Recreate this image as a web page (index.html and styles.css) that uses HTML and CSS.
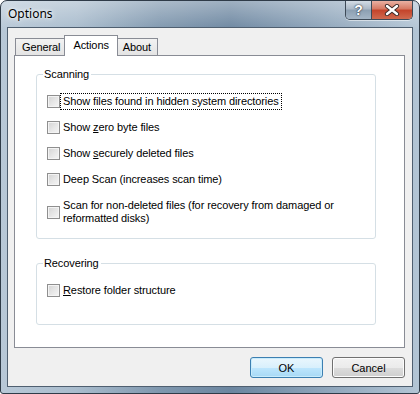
FILE: index.html
```html
<!DOCTYPE html>
<html lang="en">
  <head>
    <meta charset="UTF-8" />
    <title>Options</title>
    <link rel="stylesheet" href="styles.css">
  </head>

  <body>
    <div class="window">
      <div class="titlebar">
        <span class="title">Options</span>
        <div class="caption-buttons">
          <span class="cap help">?</span>
          <span class="cap close">
            <svg width="16" height="12" viewBox="0 0 16 12">
              <path d="M3 2 L13 10 M13 2 L3 10" stroke="#3b2a28" stroke-width="4.2" stroke-linecap="round" />
              <path d="M3 2 L13 10 M13 2 L3 10" stroke="#ffffff" stroke-width="2.4" stroke-linecap="round" />
            </svg>
          </span>
        </div>
      </div>

      <div class="client">
        <div class="tabs">
          <span class="tab">General</span>
          <span class="tab active">Actions</span>
          <span class="tab">About</span>
        </div>

        <div class="panel">
          <fieldset class="group scanning">
            <legend>Scanning</legend>
            <label class="check"><span class="box"></span><span class="text focus">Show files found in hidden system directories</span></label>
            <label class="check"><span class="box"></span><span class="text">Show <u>z</u>ero byte files</span></label>
            <label class="check"><span class="box"></span><span class="text">Show <u>s</u>ecurely deleted files</span></label>
            <label class="check"><span class="box"></span><span class="text">Deep Scan (increases scan time)</span></label>
            <label class="check"><span class="box"></span><span class="text">Scan for non-deleted files (for recovery from damaged or<br />reformatted disks)</span></label>
          </fieldset>

          <fieldset class="group recovering">
            <legend>Recovering</legend>
            <label class="check"><span class="box"></span><span class="text"><u>R</u>estore folder structure</span></label>
          </fieldset>
        </div>

        <div class="buttons">
          <button class="btn default">OK</button>
          <button class="btn">Cancel</button>
        </div>
      </div>
    </div>
  </body>
</html>
```

FILE: styles.css
```css
* {
  margin: 0;
  padding: 0;
  box-sizing: border-box;
}

body {
  width: 420px;
  height: 394px;
  font-family: "Liberation Sans", Arial, sans-serif;
  font-size: 11px;
  letter-spacing: -0.1px;
  color: #000;
  background: #ffffff;
}

.window {
  width: 420px;
  height: 394px;
  display: flex;
  flex-direction: column;
  border: 1px solid #2f3b48;
  border-radius: 7px 7px 3px 3px;
  background:
    linear-gradient(to bottom, rgba(255, 255, 255, 0.35), rgba(255, 255, 255, 0) 30px),
    linear-gradient(
      to right,
      #b8c8d7 0%,
      #a9bccd 18%,
      #7f97ae 38%,
      #6c86a0 55%,
      #8aa1b7 75%,
      #b3c5d5 100%
    );
  padding: 0 6px 6px 6px;
}

/* title bar */

.titlebar {
  height: 26px;
  display: flex;
  align-items: flex-start;
}

.title {
  font-family: "Noto Sans", "Liberation Sans", sans-serif;
  font-size: 12px;
  letter-spacing: 0;
  line-height: 26px;
  padding-left: 1px;
  text-shadow: 0 0 6px #ffffff, 0 0 3px #ffffff;
}

.caption-buttons {
  margin-left: auto;
  display: flex;
  border: 1px solid #3e4a57;
  border-top: none;
  border-radius: 0 0 5px 5px;
  overflow: hidden;
  box-shadow: 0 1px 0 rgba(255, 255, 255, 0.5);
}

.cap {
  height: 18px;
  display: flex;
  align-items: center;
  justify-content: center;
}

.help {
  width: 26px;
  border-right: 1px solid #3e4a57;
  background: linear-gradient(to bottom, #d3dce5 0%, #aab8c6 45%, #8c9fb2 50%, #a5b6c6 100%);
  color: #ffffff;
  font-weight: bold;
  font-size: 14px;
  text-shadow: 0 0 2px #2a3440, 0 0 1px #2a3440;
}

.close {
  width: 40px;
  background: linear-gradient(to bottom, #e9b1a3 0%, #d57761 45%, #c4432a 50%, #d06a4f 100%);
}

/* client area */

.client {
  flex: 1;
  border: 1px solid #4f5f70;
  background: #f0f0f0;
  display: flex;
  flex-direction: column;
}

.tabs {
  height: 28px;
  display: flex;
  align-items: flex-end;
  padding-left: 7px;
}

.tab {
  position: relative;
  height: 18px;
  line-height: 17px;
  padding: 0 6px;
  border: 1px solid #898c95;
  border-bottom: none;
  margin-right: -1px;
  background: linear-gradient(to bottom, #f2f2f2, #e3e3e3);
}

.tab.active {
  z-index: 2;
  height: 21px;
  line-height: 18px;
  padding: 0 8px;
  margin: 0 -2px 0 -2px;
  background: #ffffff;
}

.panel {
  position: relative;
  z-index: 1;
  height: 293px;
  margin: -1px 7px 0 6px;
  border: 1px solid #898c95;
  background: #ffffff;
  padding: 12px 28px 0 21px;
}

/* group boxes */

.group {
  border: 1px solid #d5dfe5;
  border-radius: 3px;
  padding: 14px 10px 13px 10px;
  display: flex;
  flex-direction: column;
  gap: 13px;
}

.group legend {
  margin-left: -4px;
  padding: 0 2px 0 1px;
  line-height: 13px;
  height: 13px;
}

.recovering {
  margin-top: 18px;
  padding-bottom: 27px;
}

.check {
  display: flex;
  align-items: center;
  gap: 2px;
  line-height: 13px;
}

.box {
  flex: none;
  width: 13px;
  height: 13px;
  border: 1px solid #8f8f8f;
  background: linear-gradient(135deg, #d3d3d3 0%, #e6e6e6 50%, #f6f6f6 100%);
  box-shadow: inset 0 0 0 1px #f4f4f4;
}

.text {
  padding: 0 1px;
}

.text.focus {
  outline: 1px dotted #000000;
  outline-offset: 1px;
}

.text u {
  text-underline-offset: 1px;
}

/* bottom buttons */

.buttons {
  display: flex;
  justify-content: flex-end;
  gap: 9px;
  padding: 9px 7px 0 0;
}

.btn {
  width: 73px;
  height: 21px;
  font-family: "Liberation Sans", Arial, sans-serif;
  font-size: 11px;
  color: #000;
  border: 1px solid #707070;
  border-radius: 3px;
  background: linear-gradient(to bottom, #f2f2f2 0%, #ebebeb 50%, #dddddd 51%, #cfcfcf 100%);
  box-shadow: inset 0 0 0 1px #fcfcfc;
}

.btn.default {
  border-color: #3c7fb1;
  background: linear-gradient(to bottom, #eaf6fd 0%, #d9f0fc 50%, #bee6fd 51%, #a7d9f5 100%);
  box-shadow: inset 0 0 0 1px #c8ecfc;
}
```
